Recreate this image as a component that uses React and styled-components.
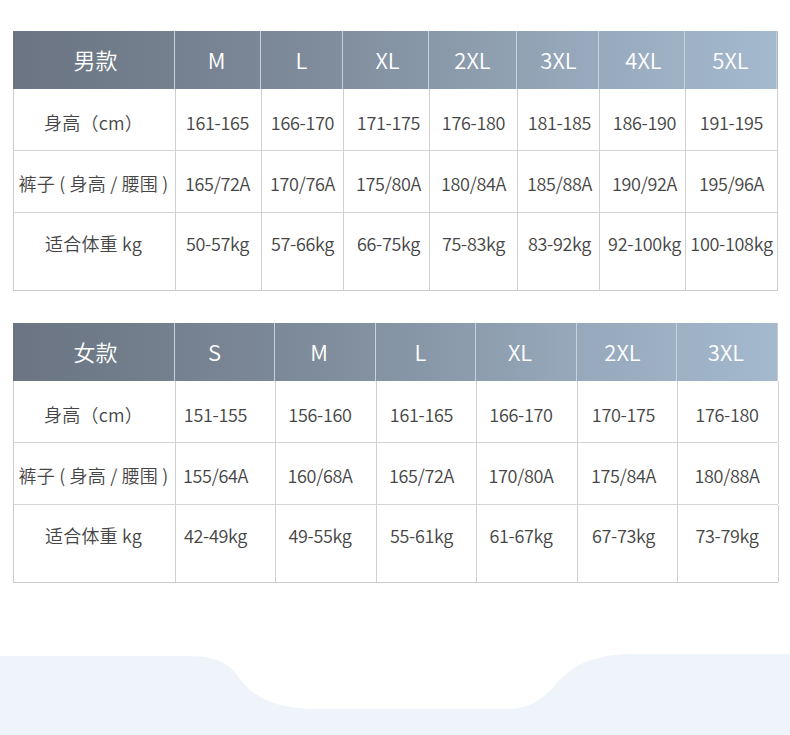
import React from 'react';
import styled, { createGlobalStyle } from 'styled-components';

const GlobalStyle = createGlobalStyle`
  * { box-sizing: border-box; }
  body {
    margin: 0;
    background: #ffffff;
    font-family: "Noto Sans CJK SC", "Noto Sans", sans-serif;
  }
`;

const Page = styled.div`
  width: 790px;
  height: 735px;
  display: flex;
  flex-direction: column;
  overflow: hidden;
`;

const Tables = styled.div`
  display: flex;
  flex-direction: column;
  gap: 32px;
  padding: 31px 0 0 13px;
`;

const Table = styled.div`
  width: 765px;
  border-left: 1px solid #cbcbcb;
  border-bottom: 1px solid #cbcbcb;
`;

const Row = styled.div`
  display: grid;
  grid-template-columns: ${({ cols }) => cols};
  height: ${({ h }) => h || 62}px;
  border-bottom: ${({ last }) => (last ? 'none' : '1px solid #d4d4d4')};
`;

const HeadRow = styled(Row)`
  height: 58px;
  margin-left: -1px;
  border-bottom: none;
  background: linear-gradient(90deg, #6a7482 0%, #7f8c9b 40%, #97a9bc 75%, #a4b9ce 100%);
`;

// shift moves the text off the cell centre, as the source layout does
const Cell = styled.div`
  display: flex;
  align-items: flex-start;
  justify-content: center;
  padding-top: ${({ pt }) => pt || 20}px;
  padding-left: ${({ shift }) => (shift > 0 ? shift * 2 : 0)}px;
  padding-right: ${({ shift }) => (shift < 0 ? -shift * 2 : 0)}px;
  border-right: 1px solid #d0d0d0;
  font-size: 18px;
  font-weight: 350;
  color: #454545;
  white-space: nowrap;
  letter-spacing: ${({ label }) => (label ? '0.2px' : '-0.3px')};
`;

const HeadCell = styled.div`
  display: flex;
  align-items: center;
  justify-content: center;
  padding-bottom: 2px;
  padding-left: ${({ shift }) => (shift > 0 ? shift * 2 : 0)}px;
  padding-right: ${({ shift }) => (shift < 0 ? -shift * 2 : 0)}px;
  border-right: 1px solid ${({ end }) => (end ? '#cbcbcb' : '#c9d2dc')};
  font-size: 22px;
  font-weight: 350;
  color: #ffffff;
  white-space: nowrap;
`;

const Wave = styled.svg`
  display: block;
  margin-top: auto;
  width: 790px;
  height: 82px;
`;

const men = {
  title: '男款',
  cols: '162px 86px 82px 86px 88px 82px 86px 92px',
  shifts: [2, -1, 0, 2, 0, 1, 2, 0],
  sizes: ['M', 'L', 'XL', '2XL', '3XL', '4XL', '5XL'],
  rows: [
    ['身高（cm）', '161-165', '166-170', '171-175', '176-180', '181-185', '186-190', '191-195'],
    ['裤子 ( 身高 / 腰围 )', '165/72A', '170/76A', '175/80A', '180/84A', '185/88A', '190/92A', '195/96A'],
    ['适合体重 kg', '50-57kg', '57-66kg', '66-75kg', '75-83kg', '83-92kg', '92-100kg', '100-108kg'],
  ],
};

const women = {
  title: '女款',
  cols: '162px 100px 101px 100px 101px 100px 101px',
  shifts: [2, -10, -6, -5, -6, -4, -1],
  sizes: ['S', 'M', 'L', 'XL', '2XL', '3XL'],
  rows: [
    ['身高（cm）', '151-155', '156-160', '161-165', '166-170', '170-175', '176-180'],
    ['裤子 ( 身高 / 腰围 )', '155/64A', '160/68A', '165/72A', '170/80A', '175/84A', '180/88A'],
    ['适合体重 kg', '42-49kg', '49-55kg', '55-61kg', '61-67kg', '67-73kg', '73-79kg'],
  ],
};

const rowSpec = [
  { h: 62, pt: 20 },
  { h: 62, pt: 19 },
  { h: 77, pt: 17 },
];

const SizeTable = ({ data }) => (
  <Table>
    <HeadRow cols={data.cols}>
      <HeadCell shift={data.shifts[0]}>{data.title}</HeadCell>
      {data.sizes.map((s, i) => (
        <HeadCell key={s} shift={data.shifts[i + 1]} end={i === data.sizes.length - 1}>{s}</HeadCell>
      ))}
    </HeadRow>
    {data.rows.map((r, i) => (
      <Row key={i} cols={data.cols} h={rowSpec[i].h} last={i === data.rows.length - 1}>
        {r.map((v, j) => (
          <Cell key={j} pt={rowSpec[i].pt} label={j === 0} shift={j === 0 ? -1 : data.shifts[j]}>{v}</Cell>
        ))}
      </Row>
    ))}
  </Table>
);

export default function App() {
  return (
    <Page>
      <GlobalStyle />
      <Tables>
        <SizeTable data={men} />
        <SizeTable data={women} />
      </Tables>
      <Wave viewBox="0 0 790 82" preserveAspectRatio="none">
        <path
          d="M0 3 H188 C222 3 232 14 240 26 C256 48 282 55 312 56 H505 C528 57 545 45 557 30 C575 9 600 1 632 1 H790 V82 H0 Z"
          fill="#eff4fb"
        />
      </Wave>
    </Page>
  );
}
